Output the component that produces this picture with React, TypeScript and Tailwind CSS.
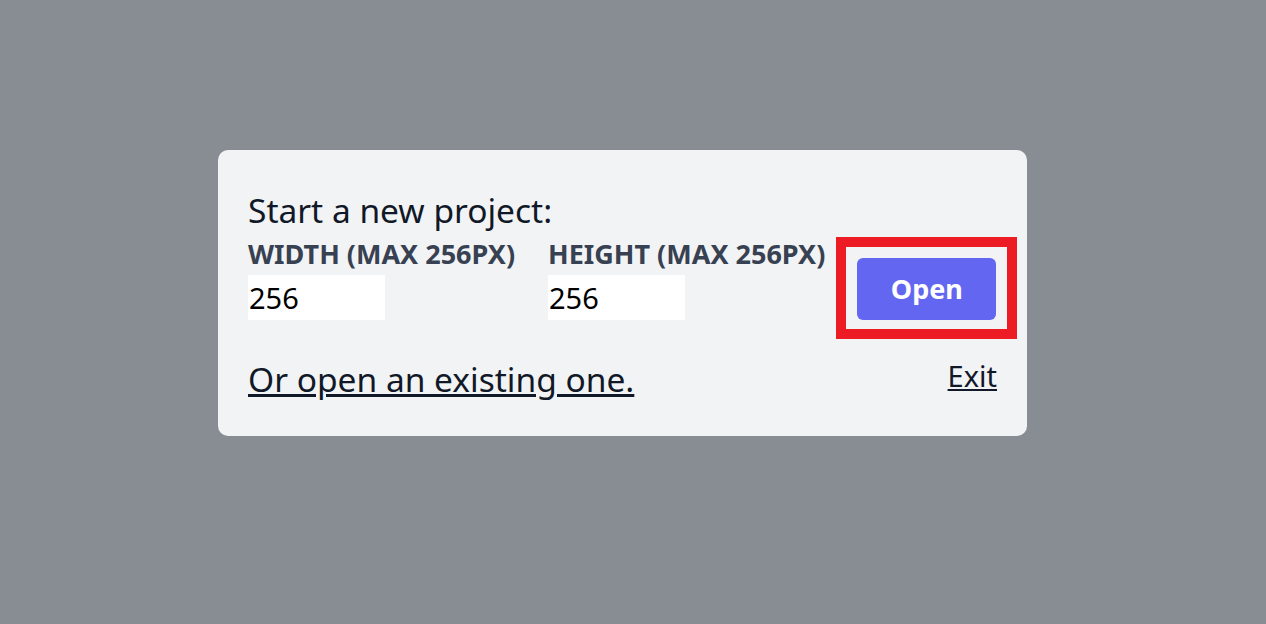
import { useState } from 'react'

function SizeField({ label, value, onChange }: { label: string; value: string; onChange: (v: string) => void }) {
  return (
    <div className="flex flex-col">
      <label className="text-[27px] font-bold leading-[30px] uppercase text-[#374151] whitespace-nowrap">{label}</label>
      <input
        value={value}
        onChange={(e) => onChange(e.target.value)}
        className="mt-[6px] h-[45px] w-[137px] bg-white px-[1px] text-[29px] text-black outline-none"
      />
    </div>
  )
}

export default function App() {
  const [width, setWidth] = useState('256')
  const [height, setHeight] = useState('256')

  return (
    <div
      className="min-h-screen bg-[#888d94] pl-[218px] pt-[150px]"
      style={{ fontFamily: '"Noto Sans", "Open Sans", sans-serif' }}
    >
      <div className="flex h-[286px] w-[809px] flex-col rounded-[10px] bg-[#f2f3f5] px-[30px] pt-[40px]">
        <h1 className="text-[33.5px] leading-[40px] text-[#111827]">Start a new project:</h1>
        <div className="mt-[9px] flex items-end gap-[33px]">
          <SizeField label="Width (max 256px)" value={width} onChange={setWidth} />
          <SizeField label="Height (max 256px)" value={height} onChange={setHeight} />
          <div className="relative -ml-[1px]">
            <button className="h-[62px] w-[139px] rounded-[6px] bg-[#6366f1] text-[27px] font-bold text-white">
              Open
            </button>
            <div className="pointer-events-none absolute -inset-x-[21px] -top-[21px] -bottom-[19px] border-[10px] border-[#ed1c24]" />
          </div>
        </div>
        <div className="mt-[37px] flex items-center justify-between">
          <a href="#" className="text-[33.5px] leading-[44px] text-[#111827] underline">
            Or open an existing one.
          </a>
          <a href="#" className="mb-[6px] text-[29px] leading-[36px] text-[#111827] underline">
            Exit
          </a>
        </div>
      </div>
    </div>
  )
}
